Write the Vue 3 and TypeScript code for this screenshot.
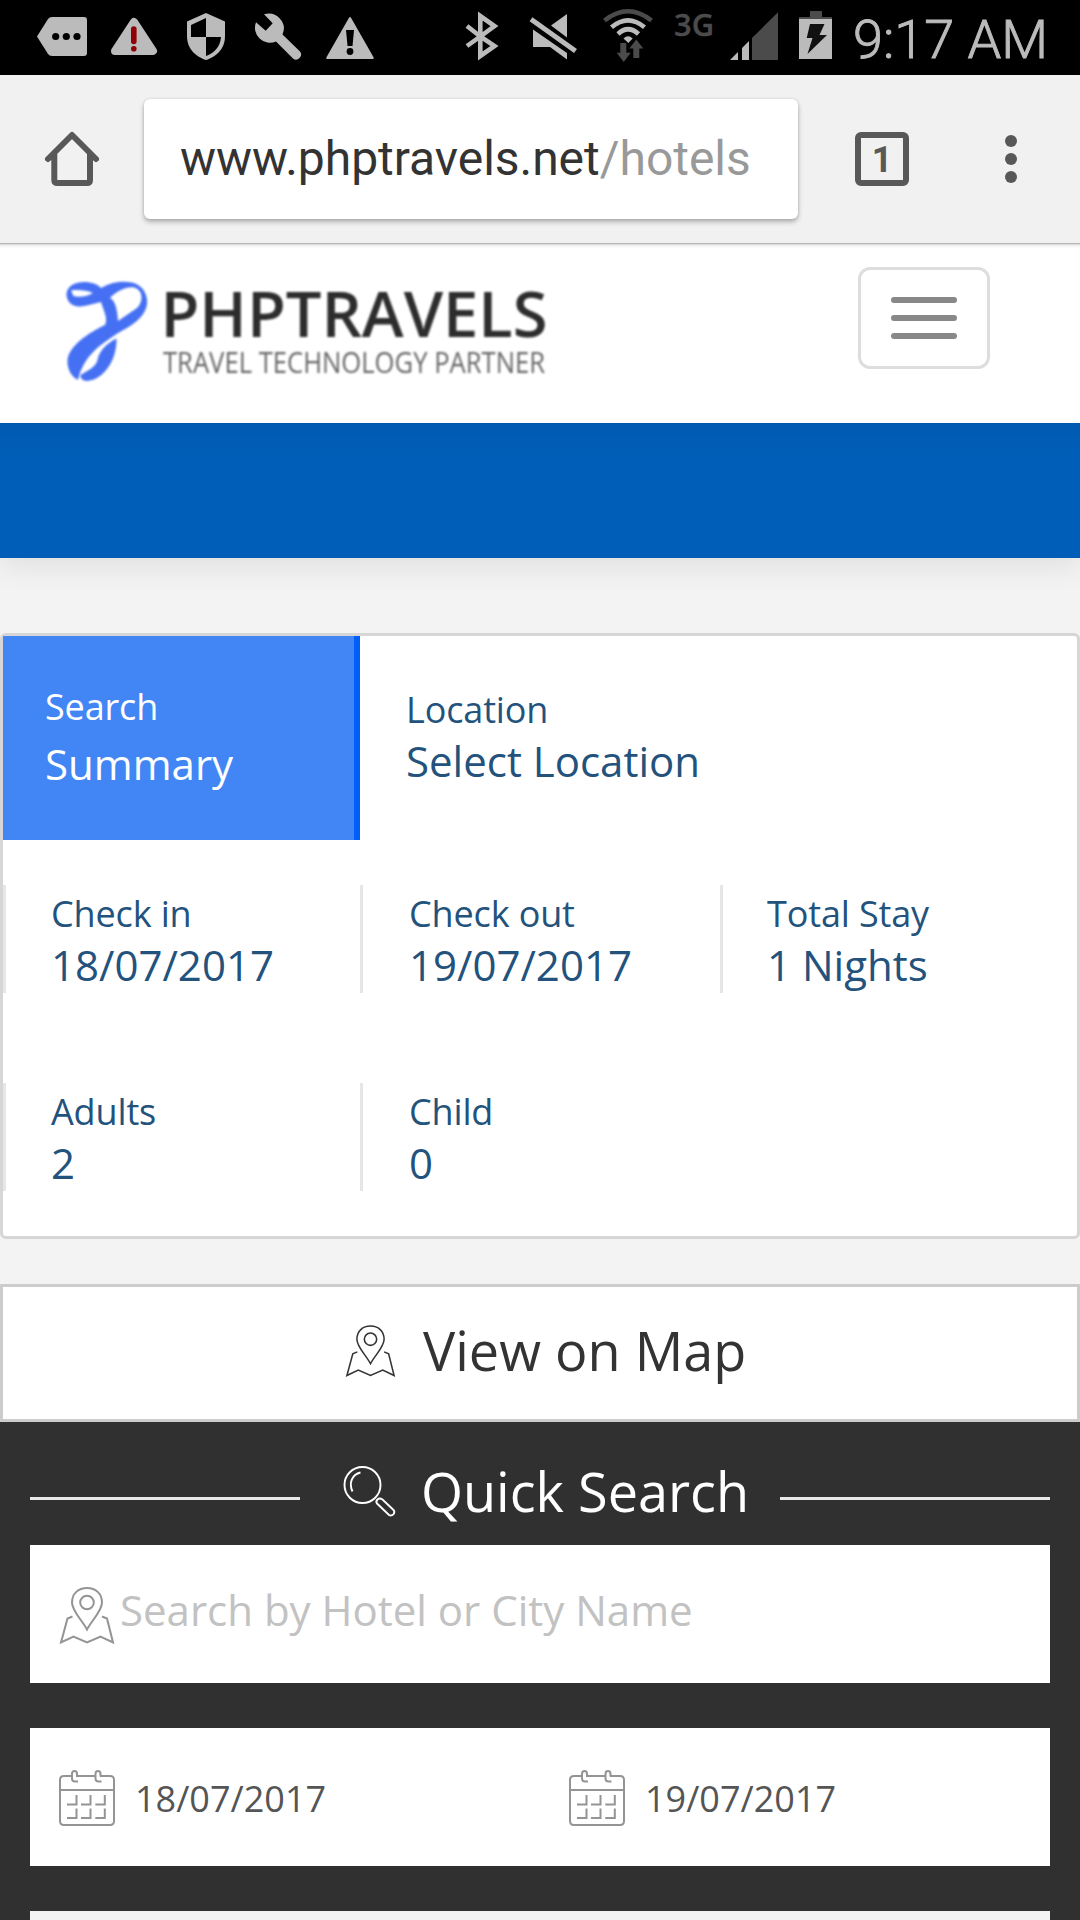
<script setup lang="ts">
interface SummaryItem {
  label: string
  value: string
}

const stay: SummaryItem[] = [
  { label: 'Check in', value: '18/07/2017' },
  { label: 'Check out', value: '19/07/2017' },
  { label: 'Total Stay', value: '1 Nights' },
]
const guests: SummaryItem[] = [
  { label: 'Adults', value: '2' },
  { label: 'Child', value: '0' },
]
const dates: string[] = ['18/07/2017', '19/07/2017']
const calendarCells: number[][] = [
  [8, 25], [22, 25], [36.3, 25],
  [8, 38.5], [22, 38.5], [36.3, 38.5],
]
</script>

<template>
  <div class="screen">
    <div class="status-bar">
      <svg width="99" height="75" viewBox="0 0 99 75">
        <path class="lit" d="M37 36.500L48 19Q49.500 17 52 17H84Q87 17 87 20V53Q87 56 84 56H52Q49.500 56 48 54Z" />
        <circle cx="55.700" cy="36.500" r="3.600" /><circle cx="66.300" cy="36.500" r="3.600" /><circle cx="77" cy="36.500" r="3.600" />
      </svg>
      <svg width="72" height="75" viewBox="99 0 72 75">
        <path d="M134 22L153 51H115Z" fill="#bbb" stroke="#bbb" stroke-width="8" stroke-linejoin="round" />
        <path d="M133.800 29V41.500" stroke="#900004" stroke-width="5.600" stroke-linecap="round" />
        <circle cx="133.800" cy="48.700" r="2.800" fill="#900004" />
      </svg>
      <svg width="69" height="75" viewBox="171 0 69 75">
        <path class="lit" d="M206 13L225 21.500V36C225 50 215 57 206 60C197 57 187 50 187 36V21.500Z" />
        <path d="M206 18V37H191V25ZM206 37H221C220.500 47 213 54 206 56Z" />
      </svg>
      <svg width="72" height="75" viewBox="240 0 72 75">
        <path class="lit" d="M264 14.300L272.700 23.300L265.700 30.700L256 22.300A15 15 0 0 0 276 41.500L293 58.500A5 5 0 0 0 300 51.500L282.500 34.500A15 15 0 0 0 264 14.300Z" />
      </svg>
      <svg width="78" height="75" viewBox="312 0 78 75">
        <path d="M350 18L372.800 58H327.200Z" fill="#bbb" stroke="#bbb" stroke-width="2" stroke-linejoin="round" />
        <path d="M346 30H354L352.500 46H347.500Z" /><circle cx="350" cy="51.500" r="3.400" />
      </svg>
      <svg width="125" height="75" viewBox="390 0 125 75">
        <path d="M467 26L480.300 36.500L494.500 46L480.300 56V16L494.500 26L480.300 36.500L467 46" fill="none" stroke="#bbb" stroke-width="4.600" />
      </svg>
      <svg width="75" height="75" viewBox="515 0 75 75">
        <path class="lit" d="M533 29.500V47H550L567 59.500V53ZM567 14V37.500L551 25.500Z" />
        <path d="M531 19.300L575.500 51" stroke="#bbb" stroke-width="5" />
      </svg>
      <svg width="75" height="75" viewBox="590 0 75 75">
        <g fill="none" stroke-width="4.600">
          <path d="M604.500 20.500Q628 2 651.500 20.500" stroke="#4b4b4b" />
          <path d="M611.500 27.300Q628 13.500 644.500 27.300" stroke="#bbb" />
          <path d="M618 34Q628 24.500 638.500 34" stroke="#bbb" />
        </g>
        <path class="lit" d="M623.500 38.500Q628 34 632.700 38.500L628.300 43Z" />
        <path fill="#4b4b4b" d="M620.300 43H626.300V52.700H630.700L623.700 62L616.700 52.700H620.300ZM636.300 39.500L643.300 48.500H639.300V58H633.300V48.500H629.300Z" />
      </svg>
      <svg width="60" height="75" viewBox="665 0 60 75">
        <text x="674" y="36.300" textLength="40" lengthAdjust="spacingAndGlyphs" class="network">3G</text>
      </svg>
      <svg width="65" height="75" viewBox="725 0 65 75">
        <path fill="#4b4b4b" d="M752 38L778 12.300V60H752Z" />
        <path class="lit" d="M742 48L749 41V60H742ZM730 60L738 52V60Z" />
      </svg>
      <svg width="50" height="75" viewBox="790 0 50 75">
        <path fill="#4b4b4b" d="M810 11H822V17H832V19H799V17H810Z" /><path class="lit" d="M799 19H832V59H799Z" />
        <path fill="#111" d="M810 24H824.500L819.500 35H827L807.500 54L812.500 38H806.700Z" />
      </svg>
      <svg width="240" height="75" viewBox="840 0 240 75">
        <text x="853" y="58" textLength="195" lengthAdjust="spacingAndGlyphs" class="clock">9:17 AM</text>
      </svg>
    </div>

    <div class="toolbar">
      <svg class="home" width="60" height="60" viewBox="42 129 60 60">
        <path d="M48 159L72 135L96 159M54.300 154V180Q54.300 183 57.500 183H87Q90 183 90 180V154" fill="none" stroke="#585858" stroke-width="6" stroke-linecap="round" stroke-linejoin="round" />
      </svg>
      <div class="address"><span>www.phptravels.net</span><span class="path">/hotels</span></div>
      <div class="tabs">1</div>
      <div class="more"><i></i><i></i><i></i></div>
    </div>

    <header class="site-header">
      <svg width="600" height="180" viewBox="0 243 600 180" class="logo">
        <path fill="#4570f3" fill-rule="evenodd" d="M66.500 295C66 279 94 279 101 288C113 281 124 281 132 282.500C143 285 148 295 147 304C145 318 131 326 118 333C100 345 84 355 78 380C70 376 67 367 67.500 360C69 346 88 333 105 325C108 318 104 312 101 302C92 304 86 306.500 78 306.500C71 306 67 301 66.500 295ZM110 298C117 291 126 286.500 134 287.500C144 290 143 303 137 308L118 321C117.500 312 116 301 110 298ZM71 290.500C78 289.500 86 290 93 293C86 297 78 297.500 73.500 296Z" />
        <path fill="#4570f3" d="M116.500 338.500C117 361 103 380 87 381C83 381 80 378 80.500 375C87 371 96 367 97.500 360C99 350 109 342 116.500 338.500Z" />
        <text x="160.500" y="336.500" textLength="387" lengthAdjust="spacingAndGlyphs" class="brand">PHPTRAVELS</text>
        <text x="163" y="372.500" textLength="382" lengthAdjust="spacingAndGlyphs" class="tagline">TRAVEL TECHNOLOGY PARTNER</text>
      </svg>
      <button class="menu" aria-label="Menu"><i></i><i></i><i></i></button>
    </header>
    <div class="band"></div>

    <main>
      <section class="summary">
        <div class="row first">
          <div class="title"><span>Search</span><strong>Summary</strong></div>
          <div class="location"><span>Location</span><strong>Select Location</strong></div>
        </div>
        <div class="row stay">
          <div v-for="item in stay" :key="item.label" class="cell">
            <span>{{ item.label }}</span><strong>{{ item.value }}</strong>
          </div>
        </div>
        <div class="row guests">
          <div v-for="item in guests" :key="item.label" class="cell">
            <span>{{ item.label }}</span><strong>{{ item.value }}</strong>
          </div>
        </div>
      </section>

      <div class="map-button">
        <svg width="49" height="52" viewBox="0 0 54 57" fill="none" stroke="#333" stroke-width="1.700">
          <path d="M27 42.500C22 33 12 24 12 15.500C12 6.500 18.500 1 27 1S42 6.500 42 15.500C42 24 32 33 27 42.500Z" />
          <circle cx="27" cy="15.500" r="6.800" />
          <path d="M12.500 29.500L7.500 31.500L1 55.500L13.500 49.500L27 55.500L40.500 49.500L53 55.500L47 31.500L42 29.500" />
        </svg>
        <span>View on Map</span>
      </div>
    </main>

    <section class="search">
      <div class="heading">
        <i></i>
        <svg width="53" height="52" viewBox="0 0 53 52" fill="none" stroke="#fff" stroke-width="1.900">
          <circle cx="19.500" cy="19" r="18" />
          <path d="M17.500 6.500C9 8.500 5.500 17 9.500 25.500" />
          <path d="M34 37.500L46 49Q49 50.500 51 47.500Q52 45 50 43.500L39.500 33.500Q36.500 31.500 34.500 33.500T34 37.500Z" />
        </svg>
        <span>Quick Search</span>
        <i></i>
      </div>
      <div class="field">
        <svg class="pin" width="54" height="57" viewBox="0 0 54 57" fill="none" stroke="#949494" stroke-width="2">
          <path d="M27 42.500C22 33 12 24 12 15.500C12 6.500 18.500 1 27 1S42 6.500 42 15.500C42 24 32 33 27 42.500Z" />
          <circle cx="27" cy="15.500" r="6.800" />
          <path d="M12.500 29.500L7.500 31.500L1 55.500L13.500 49.500L27 55.500L40.500 49.500L53 55.500L47 31.500L42 29.500" />
        </svg>
        <span class="placeholder">Search by Hotel or City Name</span>
      </div>
      <div class="field dates">
        <div v-for="date in dates" :key="date" class="date">
          <svg width="56" height="56" viewBox="0 0 56 56" fill="none" stroke="#949494" stroke-width="2">
            <path d="M13 6H5Q1 6 1 10V51Q1 55 5 55H51Q55 55 55 51V10Q55 6 51 6H41M17 6H36.500M1 20H55" />
            <path d="M19 11.500H16Q13 11.500 13 8.500V4Q13 1 15.500 1T18 4V6.500M42.500 11.500H39.500Q36.500 11.500 36.500 8.500V4Q36.500 1 39 1T41.500 4V6.500" />
            <path v-for="(c, i) in calendarCells" :key="i" :d="`M${c[0]} ${c[1] + 9.500}h9.500v-9.500`" />
          </svg>
          <span>{{ date }}</span>
        </div>
      </div>
      <div class="field next"></div>
    </section>
  </div>
</template>

<style>
body { margin: 0; overflow: hidden; }
</style>

<style scoped>
* { box-sizing: border-box; }
svg { display: block; flex: none; overflow: visible; }
.screen { width: 1080px; height: 1920px; overflow: hidden; background: #f3f3f3; font-family: "Open Sans", "Noto Sans", sans-serif; }
.status-bar { display: flex; height: 75px; background: #000; }
.lit { fill: #bbb; }
.network { font: 600 31.5px "Open Sans", sans-serif; fill: #4b4b4b; stroke: #4b4b4b; stroke-width: .4px; }
.clock { font: 300 54px Roboto, sans-serif; fill: #bbb; stroke: #bbb; stroke-width: .9px; }

.toolbar { display: flex; align-items: center; height: 168px; background: #f1f1f1; padding-left: 42px; }
.address { display: flex; margin-left: 42px; width: 654px; height: 120px; padding-left: 36px; border-radius: 6px; background: #fff; box-shadow: 0 3px 5px rgba(0,0,0,.27), 0 0 3px rgba(0,0,0,.12); font: 48px/120px Roboto, sans-serif; letter-spacing: -.03px; color: #333; white-space: nowrap; }
.address .path { color: #999; }
.tabs { margin-left: 57px; width: 54px; height: 54px; border: 6px solid #585858; border-radius: 6px; text-align: center; font: 700 36px/44px Roboto, sans-serif; color: #585858; }
.more { display: flex; flex-direction: column; gap: 6px; margin-left: 96px; }
.more i { width: 12px; height: 12px; border-radius: 50%; background: #585858; }

.site-header { position: relative; z-index: 1; display: flex; justify-content: space-between; align-items: flex-start; height: 180px; padding-right: 90px; background: linear-gradient(#b5b5b5 0, #b5b5b5 1px, #ddd 1.500px, #f6f6f6 3px, #fff 6px); }
.logo { filter: blur(.8px); }
.brand { font: 600 64px/1 "Open Sans", sans-serif; fill: #2d2d2d; }
.tagline { font: 400 30px/1 "Open Sans", sans-serif; fill: #666; }
.menu { display: flex; flex-direction: column; align-items: center; gap: 12px; margin: 24px 0 0; padding: 27px 0 0; width: 132px; height: 102px; border: 3px solid #ddd; border-radius: 12px; background: #fff; }
.menu i { width: 66px; height: 6px; border-radius: 3px; background: #888; }
.band { height: 135px; background: linear-gradient(#005ab0, #005eb8 30px); box-shadow: 0 9px 27px rgba(0,0,0,.08); }

main { padding-top: 75px; }
.summary { height: 606px; border: 3px solid #d6d6d6; border-radius: 6px; background: #fff; color: #23527c; }
.summary span, .summary strong { display: block; font-weight: 400; white-space: nowrap; }
.summary span { position: relative; top: 1px; font-size: 36px; line-height: 50px; letter-spacing: -.14px; }
.summary strong { font-size: 42px; line-height: 53px; }
.row { display: flex; }
.title { width: 357px; height: 204px; padding: 43px 0 0 42px; border-right: 6px solid #005ff9; background: #4286f5; color: #fff; }
.summary .title span { line-height: 54px; }
.summary .title strong { line-height: 62px; }
.location { padding: 48px 0 0 46px; }
.stay { margin-top: 45px; }
.guests { margin-top: 90px; }
.cell { width: 357px; height: 108px; padding: 3px 0 0 45px; border-left: 3px solid #e6e6e6; }
.cell:nth-child(2) { width: 360px; padding-left: 46px; }
.cell:nth-child(3) { width: 350px; padding-left: 44px; }
.map-button { display: flex; align-items: center; margin-top: 45px; height: 138px; padding: 0 0 5px 343px; border: 3px solid #ccc; background: #fff; font-size: 54px; color: #333; white-space: nowrap; }
.map-button span { margin: -2px 0 0 28px; }

.search { height: 498px; padding: 0 30px; background: #303030; }
.heading { display: flex; align-items: center; height: 123px; font-size: 54px; color: #fff; white-space: nowrap; }
.heading i { flex: none; width: 270px; height: 3px; margin-top: 30px; background: #e8e8e8; }
.heading svg { margin: 16px 0 0 43px; }
.heading span { flex: none; width: 384px; margin-top: 15px; padding-left: 25px; }
.field { display: flex; height: 138px; background: #fff; margin-bottom: 45px; }
.pin { margin: 42px 0 0 30px; }
.placeholder { margin-left: 6px; font-size: 42px; line-height: 130px; color: #c2c2c2; white-space: nowrap; }
.date { display: flex; width: 510px; padding: 42px 0 0 29px; font-size: 36px; color: #555; }
.date span { margin-left: 20px; line-height: 58px; }
.next { background: #f3f3f3; }
</style>
